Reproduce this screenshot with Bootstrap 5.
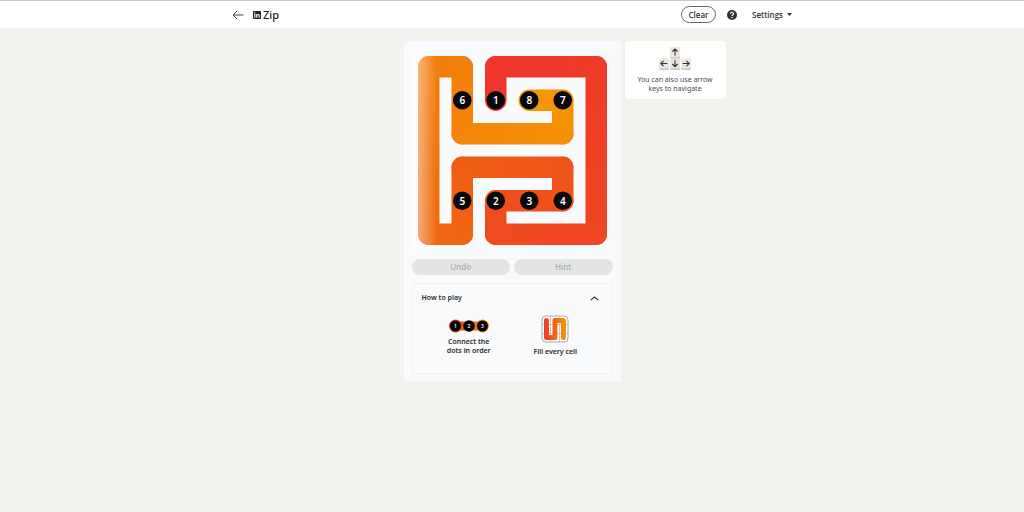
<!DOCTYPE html>
<html lang="en">
<head>
<meta charset="utf-8">
<meta name="viewport" content="width=device-width, initial-scale=1">
<title>Zip</title>
<link href="https://cdn.jsdelivr.net/npm/bootstrap@5.3.0/dist/css/bootstrap.min.css" rel="stylesheet">
<style>
  body { background: #f3f2ee; color: #2b2b2b; font-family: "Noto Sans", "Open Sans", sans-serif; font-size: 7px; line-height: 9px; }
  svg { display: block; }
  .topbar { background: #fff; border-top: 1px solid #c9c9c9; height: 28px; }
  .topbar-inner { max-width: 560px; }
  .brand { font-size: 11px; line-height: 14px; font-weight: 500; color: #222; margin-left: 9px; gap: 2px; }
  .plain { background: none; border: 0; padding: 0; color: #333; font: inherit; font-weight: 600; }
  .bar-text { font-family: "Open Sans", "Noto Sans", sans-serif; font-size: 8px; line-height: 10px; }
  .clear-btn { border: 1px solid #666; border-radius: 9px; width: 35px; height: 17px; margin-right: 11px; }
  .settings { margin-left: 15px; }
  .stage { display: grid; grid-template-columns: 1fr 217px 1fr; gap: 4px; padding-top: 13px; align-items: start; }
  .game { grid-column: 2; background: #f9fafc; border-radius: 4px 4px 0 0; padding: 9px 8px 8px; }
  .pill { flex: 1; height: 16px; border: 0; border-radius: 8px; background: #e3e5e4; color: #adafae; font-weight: 600; padding: 0; }
  .how { border: 1px solid #eff0f1; border-radius: 2px; height: 91px; padding: 9px; }
  .how h2 { font-size: 7px; line-height: 10px; font-weight: 600; }
  .how p { font-weight: 600; }
  .keys-tip { width: 101px; background: #fff; border-radius: 4px; height: 58px; padding-top: 6px; color: #4b4b4b; }
  .keys-tip svg { margin-bottom: 5px; }
  .num { font-family: "Noto Sans", "Open Sans", sans-serif; font-weight: 600; fill: #fff; text-anchor: middle; }
</style>
</head>
<body>
<header class="topbar">
  <div class="topbar-inner mx-auto h-100 d-flex align-items-center">
    <button class="plain" type="button" aria-label="Back">
      <svg width="12" height="10" viewBox="0 0 12 10" fill="none" stroke="#444" stroke-width="1"><path d="M5 1 1 5l4 4M1 5h10.500"/></svg>
    </button>
    <div class="brand d-flex align-items-center">
      <svg width="8" height="8" viewBox="0 0 16 16" aria-hidden="true"><rect width="16" height="16" rx="1.500" fill="#222"/><path fill="#fff" d="M2.500 6.200h2.300v7.300H2.500zM3.650 2.400a1.350 1.350 0 1 1 0 2.700 1.350 1.350 0 0 1 0-2.700zM6.300 6.200h2.200v1c.4-.7 1.200-1.200 2.200-1.200 2.300 0 2.800 1.500 2.800 3.500v4h-2.300V9.900c0-.9 0-1.900-1.200-1.900S8.600 8.900 8.600 9.800v3.700H6.300z"/></svg>
      <span>Zip</span>
    </div>
    <button class="plain bar-text clear-btn ms-auto" type="button">Clear</button>
    <button class="plain" type="button" aria-label="Help">
      <svg width="10" height="10" viewBox="0 0 16 16"><circle cx="8" cy="8" r="8" fill="#333"/><path d="M5.600 6.200c0-3.400 4.900-3.200 4.900-.4 0 1.900-2.300 1.800-2.300 3.700" fill="none" stroke="#fff" stroke-width="1.800"/><circle cx="8.200" cy="12" r="1.200" fill="#fff"/></svg>
    </button>
    <button class="plain bar-text settings d-flex align-items-center gap-1" type="button">Settings
      <svg width="5" height="3" viewBox="0 0 5 3"><path d="M0 0h5L2.500 3z" fill="#333"/></svg>
    </button>
  </div>
</header>

<main class="stage">
  <section class="game">
    <svg id="board" width="100%" viewBox="0 0 201 201" role="img" aria-label="Zip board">
      <defs>
        <linearGradient id="sheen"><stop offset="0" stop-color="#fff" stop-opacity=".5"/><stop offset=".3" stop-color="#fff" stop-opacity=".4"/><stop offset="1" stop-color="#fff" stop-opacity="0"/></linearGradient>
      </defs>
      <g id="trail"></g>
      <rect width="25" height="201" fill="url(#sheen)"/>
      <g id="dots"></g>
    </svg>
    <div class="d-flex gap-1 mt-2 mb-2">
      <button class="pill bar-text" type="button" disabled>Undo</button>
      <button class="pill bar-text" type="button" disabled>Hint</button>
    </div>
    <div class="how">
      <div class="d-flex justify-content-between align-items-center">
        <h2 class="mb-0">How to play</h2>
        <button class="plain me-1" type="button" aria-label="Collapse how to play">
          <svg width="9" height="5" viewBox="0 0 9 5" fill="none" stroke="#333" stroke-width="1.100"><path d="M.7 4.200 4.500 1l3.800 3.200"/></svg>
        </button>
      </div>
      <div class="row g-0 text-center px-1 mt-2 pt-1">
        <div class="col-6 d-flex flex-column align-items-center pt-1">
          <svg width="40" height="14" viewBox="0 0 40 14">
            <defs><linearGradient id="mini" gradientUnits="userSpaceOnUse" x1="0" y1="0" x2="40" y2="0"><stop offset="0" stop-color="#ee3038"/><stop offset=".5" stop-color="#ee5f18"/><stop offset="1" stop-color="#f59b05"/></linearGradient></defs>
            <g fill="url(#mini)"><circle cx="6.500" cy="7" r="6.500"/><circle cx="33.500" cy="7" r="6.500"/><path d="M6 2.500h28v9H6z"/></g>
            <circle cx="6.500" cy="7" r="5.500"/><circle cx="20" cy="7" r="5.800"/><circle cx="33.500" cy="7" r="5.500"/>
            <g class="num" font-size="5"><text x="6.500" y="9">1</text><text x="20" y="9">2</text><text x="33.500" y="9">3</text></g>
          </svg>
          <p class="mb-0 mt-1">Connect the<br>dots in order</p>
        </div>
        <div class="col-6 d-flex flex-column align-items-center">
          <svg width="28" height="28" viewBox="0 0 28 28" fill="none">
            <defs><linearGradient id="snake" gradientUnits="userSpaceOnUse" x1="3" y1="0" x2="25" y2="0"><stop offset="0" stop-color="#ee3a33"/><stop offset=".5" stop-color="#ef6512"/><stop offset="1" stop-color="#f59b05"/></linearGradient></defs>
            <rect x="1" y="1" width="26" height="26" rx="4" fill="#fff" stroke="#aaa"/>
            <path d="M9.500 1v26M18.500 1v26M1 9.500h26M1 18.500h26" stroke="#bbb" stroke-width=".8"/>
            <path d="M5.500 5.500v17H14v-17h8.500v17" stroke="url(#snake)" stroke-width="5" stroke-linecap="round" stroke-linejoin="round"/>
          </svg>
          <p class="mb-0 mt-1">Fill every cell</p>
        </div>
      </div>
    </div>
  </section>

  <aside class="keys-tip text-center">
    <svg class="mx-auto" width="32" height="23" viewBox="0 0 32 23" fill="none" stroke="#333">
      <g stroke="none"><g fill="#c9c6c0"><rect x="11" y="1" width="10" height="11" rx="1.500"/><rect y="12" width="10" height="11" rx="1.500"/><rect x="11" y="12" width="10" height="11" rx="1.500"/><rect x="22" y="12" width="10" height="11" rx="1.500"/></g>
      <g fill="#ebe7e0"><rect x="11" width="10" height="10.500" rx="1.500"/><rect y="11.500" width="10" height="10" rx="1.500"/><rect x="11" y="11.500" width="10" height="10" rx="1.500"/><rect x="22" y="11.500" width="10" height="10" rx="1.500"/></g></g>
      <path stroke-width="1.100" d="M16 8.500v-6.500M13.300 4.700 16 2l2.700 2.700M16 13.200v6.500M13.300 17l2.700 2.700 2.700-2.700M8.300 16.500H1.800M4.500 13.800l-2.700 2.700 2.700 2.700M23.700 16.500h6.500M27.500 13.800l2.700 2.700-2.700 2.700"/>
    </svg>
    <p class="mb-0">You can also use arrow<br>keys to navigate</p>
  </aside>
</main>

<script src="https://cdn.jsdelivr.net/npm/bootstrap@5.3.0/dist/js/bootstrap.bundle.min.js"></script>
<script>
  const NS = 'http://www.w3.org/2000/svg', CELL = 33.5;
  const at = n => n * CELL + CELL / 2;
  function add(parent, tag, attrs, text) {
    const el = document.createElementNS(NS, tag);
    for (const k in attrs) el.setAttribute(k, attrs[k]);
    if (text) el.textContent = text;
    parent.appendChild(el);
    return el;
  }
  // Corner cells of the solved path as [column, row]
  const path = [[2,1],[2,0],[5,0],[5,5],[2,5],[2,4],[4,4],[4,3],[1,3],[1,5],[0,5],[0,0],[1,0],[1,2],[4,2],[4,1],[3,1]];
  // Trail colours: distance in cells, then red, green, blue
  const stops = [[0,240,52,46],[4,239,58,40],[9,240,70,35],[14,239,79,27],[18,239,91,21],[22,240,104,16],[27,243,125,11],[31,244,136,8],[34,245,148,5],[36,245,156,5]];
  function colour(d) {
    let i = 1;
    while (i < stops.length - 1 && stops[i][0] < d) i++;
    const a = stops[i - 1], b = stops[i], t = (d - a[0]) / (b[0] - a[0]);
    return 'rgb(' + [1,2,3].map(k => Math.round(a[k] + (b[k] - a[k]) * t)) + ')';
  }
  const board = document.getElementById('board'), trail = document.getElementById('trail'), defs = board.querySelector('defs');
  let dist = 0;
  for (let i = 1; i < path.length; i++) {
    const [a, b] = path[i - 1], [c, d] = path[i];
    const pos = { x1: at(a), y1: at(b), x2: at(c), y2: at(d) };
    const g = add(defs, 'linearGradient', { id: 'seg' + i, gradientUnits: 'userSpaceOnUse', ...pos });
    add(g, 'stop', { offset: 0, 'stop-color': colour(dist) });
    dist += Math.abs(a - c) + Math.abs(b - d);
    add(g, 'stop', { offset: 1, 'stop-color': colour(dist) });
    add(trail, 'line', { ...pos, stroke: `url(#seg${i})`, 'stroke-width': 21.5, 'stroke-linecap': 'round' });
  }
  const dots = document.getElementById('dots');
  [[2,1],[2,4],[3,4],[4,4],[1,4],[1,1],[4,1],[3,1]].forEach(([x, y], i) => {
    add(dots, 'circle', { cx: at(x), cy: at(y), r: 9.3, fill: '#080808' });
    add(dots, 'text', { class: 'num', x: at(x), y: at(y) + 4, 'font-size': 10 }, i + 1);
  });
</script>
</body>
</html>
